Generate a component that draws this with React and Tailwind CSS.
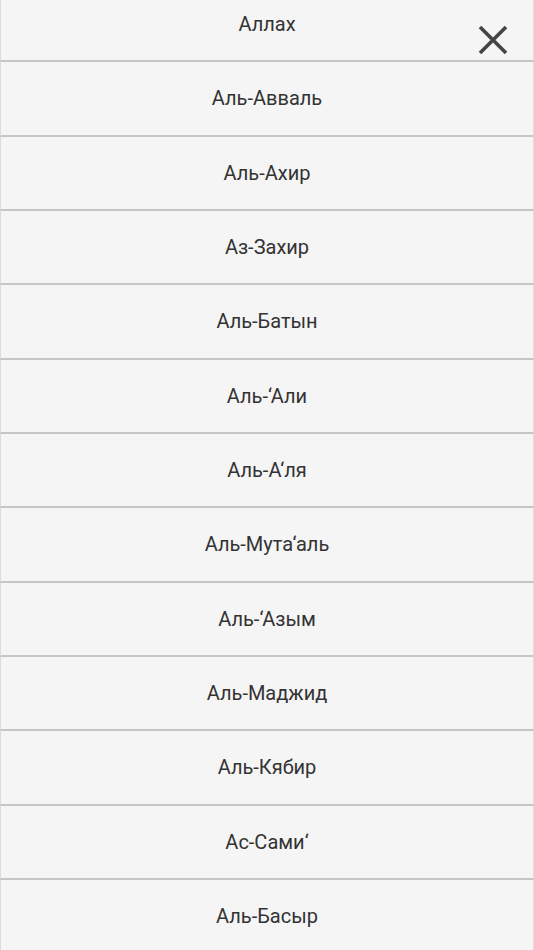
const names = [
  "Аллах",
  "Аль-Авваль",
  "Аль-Ахир",
  "Аз-Захир",
  "Аль-Батын",
  "Аль-‘Али",
  "Аль-А‘ля",
  "Аль-Мута‘аль",
  "Аль-‘Азым",
  "Аль-Маджид",
  "Аль-Кябир",
  "Ас-Сами‘",
  "Аль-Басыр",
];

export default function App() {
  return (
    <div className="relative w-[534px] h-[950px] overflow-hidden bg-[#f5f5f5] font-['Roboto',sans-serif]">
      <ul className="-mt-[12px]">
        {names.map((n) => (
          <li
            key={n}
            className="h-[74.33px] flex items-center justify-center bg-[#f5f5f5] border-l border-r border-[#dcdcdc] border-b-2 border-b-[#c6c6c6] shadow-[0_1px_0_#e6e6e6] text-[20px] text-[#333]"
          >
            {n}
          </li>
        ))}
      </ul>
      <button className="absolute top-[24px] right-[25px] w-[32px] h-[32px] flex items-center justify-center">
        <svg width="32" height="32" viewBox="0 0 32 32" fill="none" stroke="#444" strokeWidth="3.6">
          <path d="M3 3 L29 29 M29 3 L3 29" />
        </svg>
      </button>
    </div>
  );
}
